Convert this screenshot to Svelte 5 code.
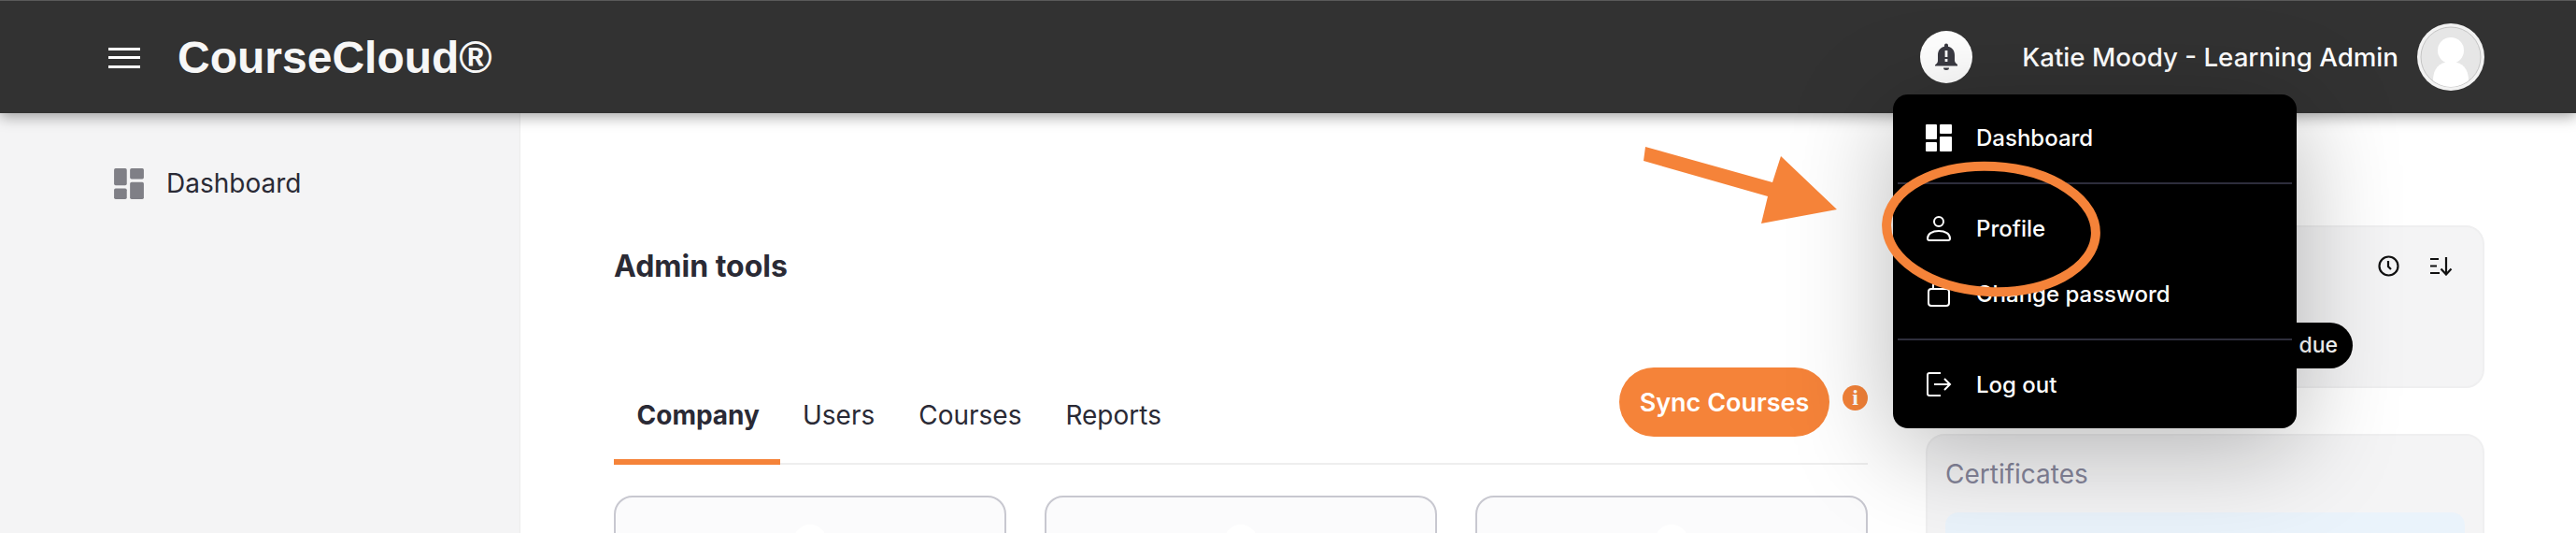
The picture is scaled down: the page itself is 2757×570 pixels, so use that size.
<script>
    const tabs = ['Company', 'Users', 'Courses', 'Reports']
    const cards = [0, 1, 2]
</script>

<div class="page">
    <header class="topbar">
        <button class="burger" aria-label="Menu">
            <span></span><span></span><span></span>
        </button>
        <div class="logo">CourseCloud®</div>
        <div class="topbar-right">
            <div class="bell">
                <svg width="30" height="32" viewBox="0 0 30 32">
                    <path fill="#3a3a42" d="M13 3.5a2 2 0 0 1 4 0v1.2c4.6 1 7 4.6 7 9.3v5.5c0 2 1.2 3 3 4.5v1.5H3V24.500c1.800-1.500 3-2.500 3-4.500V14c0-4.700 2.400-8.300 7-9.300z"/>
                    <path fill="#3a3a42" d="M12 27.500h6a3 2.500 0 0 1-6 0z"/>
                    <rect x="13.600" y="9" width="2.800" height="7" fill="#fff"/>
                    <rect x="13.600" y="18" width="2.800" height="3" fill="#fff"/>
                </svg>
            </div>
            <div class="username">Katie Moody - Learning Admin</div>
            <div class="avatar">
                <svg width="66" height="66" viewBox="0 0 66 66">
                    <circle cx="33" cy="33" r="32" fill="#e6e6e6" stroke="#c4c4c4" stroke-width="1"/>
                    <circle cx="33" cy="26" r="14" fill="#fff"/>
                    <path fill="#fff" d="M14 58c0-12 6-20 19-20s19 8 19 20c-5 4-12 7-19 7s-14-3-19-7z"/>
                </svg>
            </div>
        </div>
    </header>

    <div class="body">
        <aside class="sidebar">
            <div class="side-item">
                <svg class="side-icon" viewBox="0 0 28 29" width="34" height="33">
                    <rect width="12" height="16" rx="1.500"/>
                    <rect y="19" width="12" height="10" rx="1.500"/>
                    <rect x="15" width="13" height="10" rx="1.500"/>
                    <rect x="15" y="13" width="13" height="16" rx="1.500"/>
                </svg>
                <span>Dashboard</span>
            </div>
        </aside>

        <main class="main">
            <section class="left">
                <h2>Admin tools</h2>
                <div class="tab-row">
                    <nav class="tabs">
                        {#each tabs as tab, i}
                            <div class="tab" class:active={i == 0}>{tab}</div>
                        {/each}
                    </nav>
                    <div class="sync">
                        <button class="sync-btn">Sync Courses</button>
                        <div class="info">i</div>
                    </div>
                </div>
                <div class="tool-cards">
                    {#each cards as c}
                        <div class="tool-card"><div class="dome"></div></div>
                    {/each}
                </div>
            </section>

            <section class="right">
                <div class="panel first">
                    <div class="panel-icons">
                        <svg width="23" height="23" viewBox="0 0 23 23" fill="none" stroke="#111" stroke-width="2.200">
                            <circle cx="11.500" cy="11.500" r="10"/>
                            <path d="M11 6v6l3 3"/>
                        </svg>
                        <svg width="24" height="21" viewBox="0 0 24 21" fill="none" stroke="#111" stroke-width="2.200">
                            <path d="M0 3h9M0 10.500h7M0 18h10"/>
                            <path d="M17 1v18M11.500 13.500l5.500 6 5.500-6"/>
                        </svg>
                    </div>
                    <div class="pill">due</div>
                </div>
                <div class="panel second">
                    <div class="panel-title">Certificates</div>
                    <div class="cert"></div>
                </div>
            </section>
        </main>
    </div>

    <div class="menu">
        <div class="menu-item">
            <svg width="28" height="29" viewBox="0 0 28 29" fill="#fff">
                <rect width="12" height="16" rx="1"/>
                <rect y="19" width="12" height="10" rx="1"/>
                <rect x="15" width="13" height="10" rx="1"/>
                <rect x="15" y="13" width="13" height="16" rx="1"/>
            </svg>
            <span>Dashboard</span>
        </div>
        <div class="divider"></div>
        <div class="menu-item">
            <svg width="28" height="28" viewBox="0 0 28 28" fill="none" stroke="#fff" stroke-width="2">
                <circle cx="14" cy="7" r="5"/>
                <path d="M2 25c0-5 5-8 12-8s12 3 12 8c0 1-1 2-2 2H4c-1 0-2-1-2-2z"/>
            </svg>
            <span>Profile</span>
        </div>
        <div class="menu-item">
            <svg width="28" height="28" viewBox="0 0 28 28" fill="none" stroke="#fff" stroke-width="2">
                <path d="M8 9V5a6 6 0 0 1 12 0v4"/>
                <rect x="3" y="9" width="22" height="18" rx="3"/>
            </svg>
            <span>Change password</span>
        </div>
        <div class="divider"></div>
        <div class="menu-item">
            <svg width="28" height="28" viewBox="0 0 28 28" fill="none" stroke="#fff" stroke-width="2">
                <path d="M16 2H4C2.500 2 2 3 2 4v20c0 1 .5 2 2 2h12"/>
                <path d="M9 14h17M20 8l6 6-6 6"/>
            </svg>
            <span>Log out</span>
        </div>
    </div>

    <svg class="annotation" width="2757" height="570" viewBox="0 0 2757 570">
        <polygon fill="#f58339" points="1761,157 1897,195 1906,167 1966,224 1885,239 1892,210 1759,172"/>
        <ellipse cx="2131" cy="245" rx="112" ry="67" fill="none" stroke="#f58339" stroke-width="10" transform="rotate(3 2131 245)"/>
    </svg>
</div>

<style>
    :global(body){
        margin: 0;
        background: #fff;
    }
    .page{
        position: relative;
        width: 2757px;
        height: 570px;
        overflow: hidden;
        font-family: Inter, "Noto Sans", sans-serif;
        color: #2a2a35;
    }
    .topbar{
        position: relative;
        z-index: 2;
        display: flex;
        align-items: center;
        box-sizing: border-box;
        height: 121px;
        padding: 0 98px 0 116px;
        background: #323232;
        border-top: 1px solid #5a5a5a;
        box-shadow: 0 4px 14px rgba(0, 0, 0, 0.35);
    }
    .burger{
        display: flex;
        flex-direction: column;
        justify-content: space-between;
        width: 34px;
        height: 22px;
        padding: 0;
        margin-right: 40px;
        margin-top: 1px;
        background: none;
        border: 0;
    }
    .burger span{
        height: 3px;
        background: #fff;
    }
    .logo{
        font: bold 48px "Liberation Sans", Arial, sans-serif;
        color: #f7f7f7;
    }
    .topbar-right{
        margin-left: auto;
        display: flex;
        align-items: center;
    }
    .bell{
        display: flex;
        align-items: center;
        justify-content: center;
        width: 56px;
        height: 56px;
        border-radius: 50%;
        background: #fff;
    }
    .username{
        margin: 0 20px 0 53px;
        font-size: 27.700px;
        font-weight: 500;
        color: #fff;
    }
    .avatar{
        display: flex;
        align-items: center;
        justify-content: center;
        width: 72px;
        height: 72px;
        border-radius: 50%;
        background: #f2f2f2;
    }
    .body{
        display: flex;
        height: 449px;
    }
    .sidebar{
        box-sizing: border-box;
        width: 557px;
        padding: 58px 0 0 121px;
        background: #f4f4f5;
        border-right: 1px solid #ececec;
    }
    .side-item{
        display: flex;
        align-items: center;
        gap: 23px;
        font-size: 28px;
    }
    .side-icon{
        fill: #7f7f86;
    }
    .main{
        flex: 1;
        display: flex;
        gap: 62px;
        padding: 0 98px 0 100px;
    }
    .left{
        width: 1342px;
    }
    h2{
        margin: 144px 0 0;
        font-size: 32px;
        line-height: 40px;
        font-weight: 700;
    }
    .tab-row{
        display: flex;
        justify-content: space-between;
        align-items: flex-start;
        height: 122px;
        margin-top: 68px;
        border-bottom: 2px solid #eeeeee;
    }
    .tabs{
        display: flex;
    }
    .tab{
        box-sizing: border-box;
        height: 124px;
        padding: 53px 23.500px 0;
        font-size: 28px;
        line-height: 36px;
    }
    .tab.active{
        padding: 53px 22.500px 0 24.500px;
        font-weight: 700;
        border-bottom: 6px solid #f58339;
    }
    .sync{
        display: flex;
        align-items: flex-start;
        gap: 14px;
        margin-top: 20px;
    }
    .sync-btn{
        width: 225px;
        height: 74px;
        border: 0;
        border-radius: 37px;
        background: #f58339;
        color: #fff;
        font: 600 27px Inter, "Noto Sans", sans-serif;
    }
    .info{
        width: 27px;
        height: 27px;
        margin-top: 19px;
        border-radius: 50%;
        background: #f58339;
        color: #fff;
        font: bold 24px/27px "Liberation Serif", serif;
        text-align: center;
    }
    .tool-cards{
        display: grid;
        grid-template-columns: repeat(3, 1fr);
        gap: 41px;
        margin-top: 33px;
    }
    .tool-card{
        display: flex;
        justify-content: center;
        height: 200px;
        background: #fbfbfc;
        border: 2px solid #c8c8d0;
        border-radius: 20px;
    }
    .dome{
        width: 36px;
        height: 36px;
        margin-top: 29px;
        border-radius: 50%;
        background: #fff;
    }
    .right{
        width: 598px;
    }
    .panel{
        box-sizing: border-box;
        background: #f4f4f5;
        border: 2px solid #efeff0;
        border-radius: 20px;
    }
    .first{
        height: 174px;
        margin-top: 120px;
        padding-top: 30px;
    }
    .panel-icons{
        display: flex;
        justify-content: flex-end;
        align-items: center;
        gap: 33px;
        padding-right: 32px;
    }
    .pill{
        box-sizing: border-box;
        width: 160px;
        height: 49px;
        margin: 49px 0 0 295px;
        padding: 0 16px 0 0;
        border-radius: 25px;
        background: #000;
        color: #fff;
        font-size: 23px;
        font-weight: 500;
        line-height: 49px;
        text-align: right;
    }
    .second{
        height: 300px;
        margin-top: 49px;
        padding: 23px 19px 0;
    }
    .panel-title{
        font-size: 28px;
        line-height: 36px;
        color: #85859a;
    }
    .cert{
        height: 200px;
        margin-top: 23px;
        background: #eaf3fb;
        border-radius: 14px;
    }
    .menu{
        position: absolute;
        z-index: 3;
        top: 101px;
        left: 2026px;
        box-sizing: border-box;
        width: 432px;
        height: 357px;
        padding: 11px 5px 0;
        background: #000;
        border-radius: 16px;
        box-shadow: 0 20px 110px rgba(0, 0, 0, 0.28);
        color: #fff;
        font-size: 24px;
        font-weight: 500;
    }
    .menu-item{
        display: flex;
        align-items: center;
        gap: 26px;
        height: 70px;
        padding-left: 30px;
    }
    .divider{
        height: 1.500px;
        margin: 13px 0 12.500px;
        background: #2e2e3c;
    }
    .annotation{
        position: absolute;
        z-index: 4;
        top: 0;
        left: 0;
        pointer-events: none;
    }
</style>
